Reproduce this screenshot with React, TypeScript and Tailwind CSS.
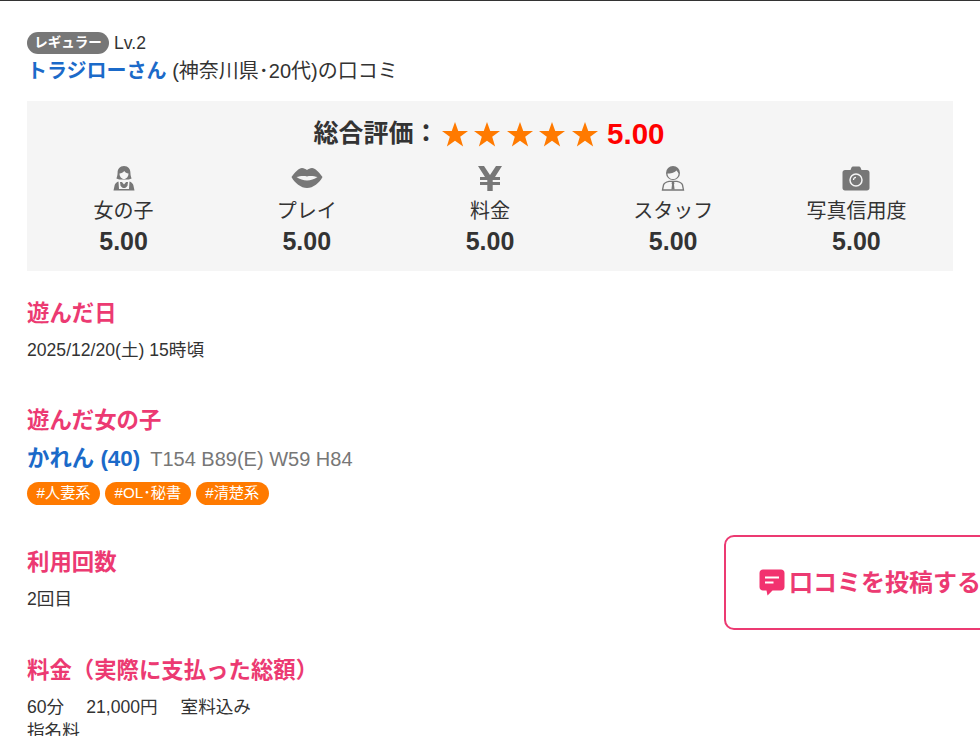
import React from "react";

const font = { fontFamily: '"Liberation Sans", "Noto Sans CJK JP", sans-serif' };

function Girl() {
  return (
    <svg width="24" height="26" viewBox="0 0 24 26">
      <path fill="#777" d="M12 1c-4.200 0-6.400 3-6.400 6.600 0 2.600-.6 4.600-1.200 6l2.800 1h9.600l2.800-1c-.6-1.400-1.200-3.400-1.200-6C18.400 4 16.200 1 12 1z" />
      <path fill="#f5f5f5" d="M7.500 8.500c2 0 3.500-1 4.800-2.500.8 1.300 2.400 2.300 4.200 2.500 0 3-2 5.500-4.500 5.500s-4.500-2.500-4.500-5.500z" />
      <path fill="#777" d="M1.500 25.500l1.200-5.500c.3-1.300 2-2.800 3.800-3.400L7 24h10l.5-7.400c1.800.6 3.500 2.100 3.800 3.400l1.200 5.500z" />
      <path fill="#777" d="M8 17h8l-.5 3.500c-1 2-2.200 2.500-3.500 2.500s-2.500-.5-3.500-2.500z" />
      <path fill="#f5f5f5" d="M9.500 16.500h5L12 19.500z" />
    </svg>
  );
}

function Lips() {
  return (
    <svg width="32" height="22" viewBox="0 0 32 22">
      <path fill="#777" d="M.5 10C4 5 8 1 11 1c2 0 3.500 1 5 2 1.500-1 3-2 5-2 3 0 7 4 10.500 9-3 6-9.500 11-15.500 11S3.500 16 .5 10z" />
      <path fill="#f5f5f5" d="M5.500 10c3-.8 7-1.500 10.500-.6 3.500-.9 7.500-.2 10.500.6-3 2.200-7 3.400-10.500 3.400S8.500 12.200 5.500 10z" />
    </svg>
  );
}

function Yen() {
  return (
    <svg width="26" height="26" viewBox="0 0 26 26">
      <path fill="#777" d="M1 1h6l6 9 6-9h6l-7 11h5v3h-7.300v2H23v3h-7.300v6h-5.400v-6H3v-3h7.300v-2H3v-3h5z" />
    </svg>
  );
}

function Staff() {
  return (
    <svg width="24" height="26" viewBox="0 0 24 26">
      <circle cx="12" cy="8" r="7" fill="#777" />
      <path fill="#f5f5f5" d="M6.500 8.500c2.500 0 7-.5 9-3 .8 1 1.600 2.200 2 3 0 3.500-2.500 5.500-5.500 5.500S6.500 12 6.500 8.500z" />
      <path fill="none" stroke="#777" strokeWidth="1.300" d="M1.500 25l1-5c.4-1.700 2.500-3 5.500-3.700h8c3 .7 5.100 2 5.500 3.700l1 5z" />
      <path fill="#777" d="M11 16.500h2l.4 2-.4 1 .6 5h-3.200l.6-5-.4-1z" />
    </svg>
  );
}

function Camera() {
  return (
    <svg width="28" height="25" viewBox="0 0 28 25">
      <path fill="#777" d="M3 4h5.500l1-2.500C9.800.8 10.400.5 11 .5h6c.6 0 1.200.3 1.500 1L19.500 4H25c1.400 0 2.500 1 2.500 2.500V22c0 1.400-1.100 2.500-2.500 2.500H3C1.600 24.500.5 23.400.5 22V6.500C.5 5 1.600 4 3 4z" />
      <circle cx="14" cy="14" r="6" fill="none" stroke="#f5f5f5" strokeWidth="1.500" />
      <path fill="none" stroke="#f5f5f5" strokeWidth="1.200" d="M11.500 14c0-1.500 1-2.500 2.500-2.600" />
    </svg>
  );
}

function Star() {
  return (
    <svg width="26" height="25" viewBox="0 0 24 23" className="mx-[3.250px]">
      <path fill="#ff7a00" d="M12 0l3 8.300h9l-7.200 5.300 2.700 9L12 17.200l-7.500 5.400 2.700-9L0 8.300h9z" />
    </svg>
  );
}

function Chat() {
  return (
    <svg width="26" height="27" viewBox="0 0 26 27" className="shrink-0">
      <path fill="#f2326f" d="M4 .5h18c2 0 3.500 1.500 3.500 3.500v14c0 2-1.500 3.500-3.500 3.500h-8.500L8.500 26.500 7.500 21.500H4C2 21.500.5 20 .5 18V4C.5 2 2 .5 4 .5z" />
      <path fill="#fff" d="M6 7.500h14v2H6zM6 12.500h8.500v2H6z" />
    </svg>
  );
}

const scores = [
  { label: "女の子", icon: <Girl /> },
  { label: "プレイ", icon: <Lips /> },
  { label: "料金", icon: <Yen /> },
  { label: "スタッフ", icon: <Staff /> },
  { label: "写真信用度", icon: <Camera /> },
];

function Heading({ children }: { children: React.ReactNode }) {
  return <h3 className="text-[22.4px] leading-[30px] font-bold text-[#ec3a72]">{children}</h3>;
}

export default function App() {
  return (
    <div style={font} className="relative h-[736px] w-[980px] overflow-hidden border-t border-[#333] bg-white text-[#333]">
      <div className="px-[27px] pt-[31px]">
        <div className="flex h-[22px] items-center">
          <span className="flex h-[22px] w-[82px] items-center justify-center rounded-full bg-[#777] text-[13.500px] font-bold text-white">レギュラー</span>
          <span className="ml-[5px] text-[17.600px]">Lv.2</span>
        </div>
        <p className="mt-[2px] h-[30px] text-[20px] leading-[30px]">
          <span className="font-bold text-[#1b6ac9]">トラジローさん</span> (神奈川県･20代)の口コミ
        </p>

        <div className="mt-[15px] h-[170px] bg-[#f5f5f5] px-[5px]">
          <div className="flex h-[63px] items-center justify-center pt-[3px] pr-[2px]">
            <span className="text-[25px] font-bold">総合評価：</span>
            <Star /><Star /><Star /><Star /><Star />
            <span className="ml-[6px] text-[29.500px] font-bold text-[#f00]">5.00</span>
          </div>
          <div className="grid grid-cols-5">
            {scores.map((s) => (
              <div key={s.label} className="flex flex-col items-center">
                <div className="flex h-[28px] items-center justify-center">{s.icon}</div>
                <div className="mt-[5px] text-[20px] leading-[28px]">{s.label}</div>
                <div className="text-[25px] leading-[32px] font-bold">5.00</div>
              </div>
            ))}
          </div>
        </div>

        <section className="mt-[28px]">
          <Heading>遊んだ日</Heading>
          <p className="mt-[7px] text-[17.600px] leading-[28px]">2025/12/20(土) 15時頃</p>
        </section>

        <section className="mt-[42px]">
          <Heading>遊んだ女の子</Heading>
          <div className="mt-[7px] flex h-[32px] items-center">
            <span className="text-[22.400px] font-bold text-[#1b6ac9]">かれん (40)</span>
            <span className="ml-[10px] text-[20px] text-[#777]">T154 B89(E) W59 H84</span>
          </div>
          <div className="mt-[7px] flex gap-[5px]">
            {["#人妻系", "#OL･秘書", "#清楚系"].map((t) => (
              <span key={t} className="flex h-[23px] items-center rounded-full bg-[#ff7a00] px-[9.500px] text-[15.200px] text-white">{t}</span>
            ))}
          </div>
        </section>

        <section className="mt-[43px]">
          <Heading>利用回数</Heading>
          <p className="mt-[7px] text-[17.600px] leading-[28px]">2回目</p>
        </section>

        <section className="mt-[43px]">
          <Heading>料金（実際に支払った総額）</Heading>
          <p className="mt-[9px] text-[17.600px] leading-[24px]">
            <span>60分</span>
            <span className="ml-[22px]">21,000円</span>
            <span className="ml-[23px]">室料込み</span>
          </p>
          <p className="text-[17.600px] leading-[24px]">指名料</p>
        </section>
      </div>

      <a className="absolute top-[534px] left-[724px] flex h-[95px] w-[300px] items-center gap-[4px] rounded-[10px] border-2 border-[#ec3a72] bg-white pl-[33px] text-[24px] font-bold whitespace-nowrap text-[#ec3a72]">
        <Chat />
        <span>口コミを投稿する</span>
      </a>
    </div>
  );
}
